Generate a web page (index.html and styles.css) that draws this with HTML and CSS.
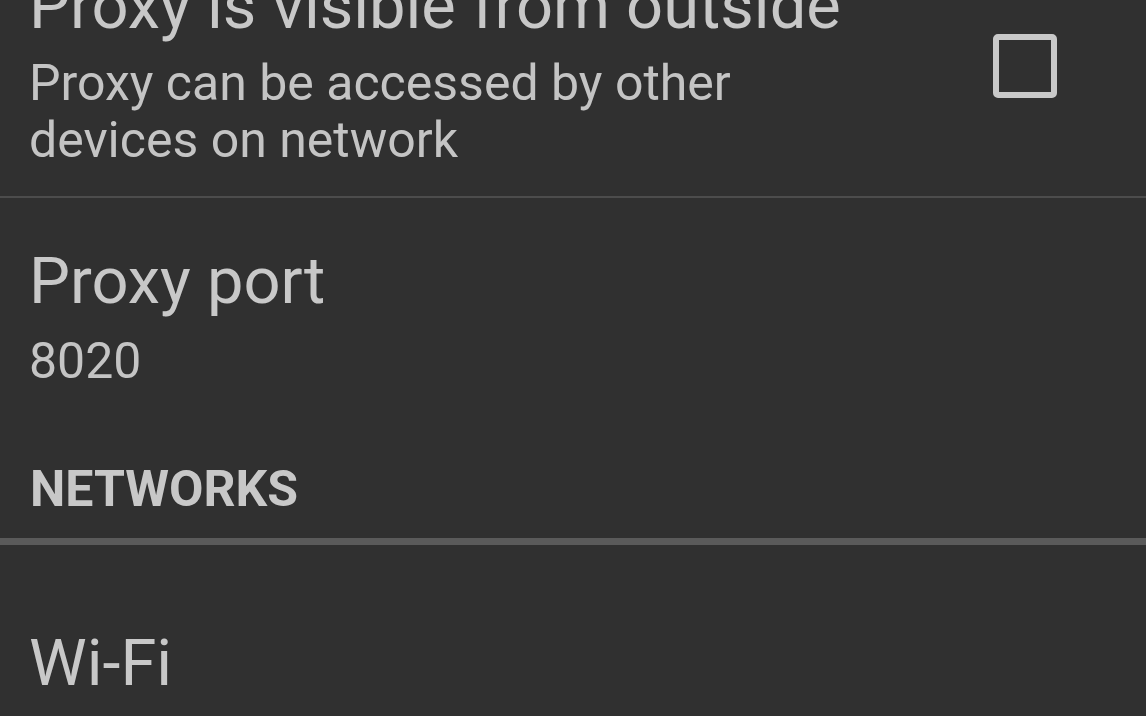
FILE: index.html
```html
<!DOCTYPE html>
<html lang="en">
<head>
  <meta charset="UTF-8" />
  <meta name="viewport" content="width=device-width, initial-scale=1.0" />
  <title>Proxy settings</title>
  <link rel="stylesheet" href="styles.css">
</head>
<body>
  <div id="settings">
    <div class="pref pref-first">
      <div class="pref-text">
        <div class="pref-title">Proxy is visible from outside</div>
        <div class="pref-summary">Proxy can be accessed by other<br>devices on network</div>
      </div>
      <div class="checkbox"></div>
    </div>

    <div class="pref pref-port">
      <div class="pref-text">
        <div class="pref-title">Proxy port</div>
        <div class="pref-summary">8020</div>
      </div>
    </div>

    <div class="category">NETWORKS</div>

    <div class="pref pref-wifi">
      <div class="pref-text">
        <div class="pref-title">Wi-Fi</div>
      </div>
    </div>
  </div>
</body>
</html>
```

FILE: styles.css
```css
html, body {
  margin: 0;
  height: 100%;
  overflow: hidden;
}

body {
  font-family: Roboto, "Noto Sans", sans-serif;
  background-color: #303030;
  color: #c8c8c8;
}

#settings {
  margin-top: -33px;
}

.pref {
  display: flex;
  align-items: flex-start;
  padding: 0 89px 0 29px;
}

.pref-text {
  flex: 1;
}

.pref-title {
  font-size: 65px;
  line-height: 78px;
}

.pref-summary {
  font-size: 50px;
  line-height: 57px;
  color: #c4c4c4;
}

.pref-first {
  padding-bottom: 27px;
  border-bottom: 2px solid #4c4c4c;
}

.pref-first .pref-summary {
  margin-top: 10px;
}

.checkbox {
  width: 52px;
  height: 52px;
  margin-top: 67px;
  border: 6px solid #c8c8c8;
  border-radius: 5px;
}

.pref-port {
  padding-top: 44px;
}

.pref-port .pref-summary {
  margin-top: 13px;
}

.category {
  font-size: 50px;
  line-height: 57px;
  font-weight: bold;
  padding: 71px 29px 20px 30px;
  border-bottom: 7px solid #5a5a5a;
}

.pref-wifi {
  padding-top: 79px;
}
```
